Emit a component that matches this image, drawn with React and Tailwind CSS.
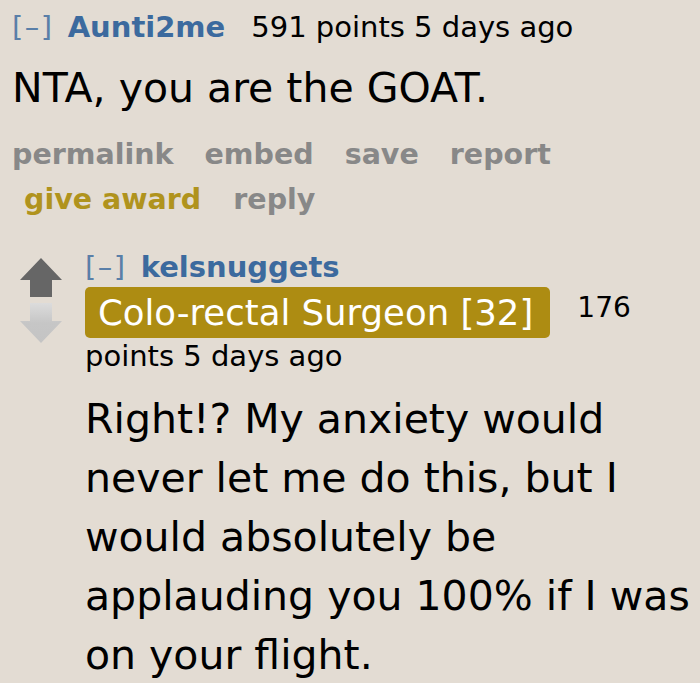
const font = { fontFamily: '"DejaVu Sans", Verdana, sans-serif' };

const UpArrow = () => (
  <svg width="42" height="39" viewBox="0 0 42 39">
    <path d="M21 0 L42 22 L32 22 L32 39 L10 39 L10 22 L0 22 Z" fill="#666666" />
  </svg>
);

const DownArrow = () => (
  <svg width="42" height="40" viewBox="0 0 42 40">
    <defs>
      <linearGradient id="dg" x1="0" y1="0" x2="0" y2="1">
        <stop offset="0" stopColor="#dcdcdc" />
        <stop offset="0.5" stopColor="#c6c6c6" />
        <stop offset="1" stopColor="#c4c4c4" />
      </linearGradient>
    </defs>
    <path d="M10 0 L32 0 L32 18 L42 18 L21 40 L0 18 L10 18 Z" fill="url(#dg)" />
  </svg>
);

const Collapse = () => <span className="tracking-[1.5px] text-[#5a7fa8]">[–]</span>;

export default function App() {
  return (
    <div className="w-[700px] h-[683px] overflow-hidden bg-[#e3dcd3] text-black" style={font}>
      <div className="pl-[12px] pt-[9px]">
        {/* parent comment */}
        <div className="flex items-baseline text-[29px] leading-[36px] whitespace-nowrap">
          <Collapse />
          <span className="ml-[14px] font-bold text-[#3c6a9e]">Aunti2me</span>
          <span className="ml-[26px]">591 points 5 days ago</span>
        </div>
        <p className="mt-[19px] text-[41px] leading-[48px] whitespace-nowrap">NTA, you are the GOAT.</p>
        <div className="mt-[25px] flex gap-[31px] text-[28.5px] font-bold leading-[36px] text-[#888888]">
          <span>permalink</span>
          <span>embed</span>
          <span>save</span>
          <span>report</span>
        </div>
        <div className="mt-[9px] ml-[12px] flex gap-[32px] text-[28.5px] font-bold leading-[36px]">
          <span className="text-[#b0931d]">give award</span>
          <span className="text-[#888888]">reply</span>
        </div>

        {/* child comment */}
        <div className="mt-[33px] flex">
          <div className="ml-[8px] mt-[7px] flex w-[65px] flex-col gap-[6px]">
            <UpArrow />
            <DownArrow />
          </div>
          <div className="flex-1">
            <div className="flex items-baseline text-[29px] leading-[32px] whitespace-nowrap">
              <Collapse />
              <span className="ml-[14px] font-bold text-[#3c6a9e]">kelsnuggets</span>
            </div>
            <div className="mt-[4px] flex items-start">
              <span className="rounded-[5px] bg-[#ad8c12] pl-[13px] pr-[17px] text-[35.5px] leading-[51px] text-white whitespace-nowrap">
                Colo-rectal Surgeon [32]
              </span>
              <span className="ml-[27px] mt-[5px] text-[28px] leading-[32px]">176</span>
            </div>
            <div className="text-[29px] leading-[36px]">points 5 days ago</div>
            <p className="mt-[16px] text-[41px] leading-[59px] whitespace-nowrap">
              Right!? My anxiety would
              <br />
              never let me do this, but I
              <br />
              would absolutely be
              <br />
              applauding you 100% if I was
              <br />
              on your flight.
            </p>
          </div>
        </div>
      </div>
    </div>
  );
}
